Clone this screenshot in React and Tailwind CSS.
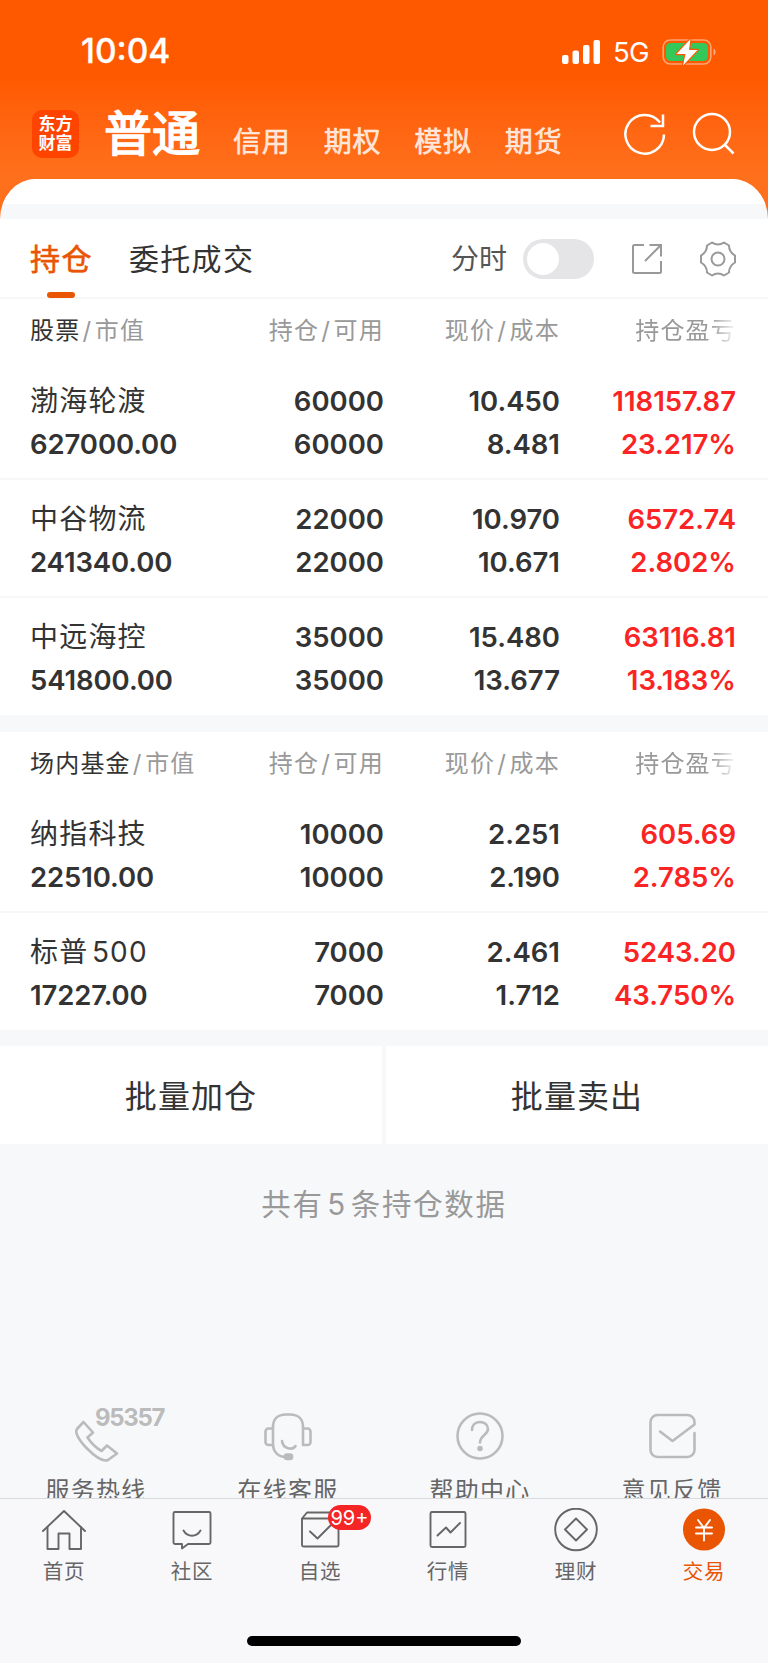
import { useState } from "react";
import clsx from "clsx";

const stocks = [
  { name: "渤海轮渡", value: "627000.00", held: "60000", usable: "60000", price: "10.450", cost: "8.481", profit: "118157.87", rate: "23.217%" },
  { name: "中谷物流", value: "241340.00", held: "22000", usable: "22000", price: "10.970", cost: "10.671", profit: "6572.74", rate: "2.802%" },
  { name: "中远海控", value: "541800.00", held: "35000", usable: "35000", price: "15.480", cost: "13.677", profit: "63116.81", rate: "13.183%" },
];

const funds = [
  { name: "纳指科技", value: "22510.00", held: "10000", usable: "10000", price: "2.251", cost: "2.190", profit: "605.69", rate: "2.785%" },
  { name: "标普500", value: "17227.00", held: "7000", usable: "7000", price: "2.461", cost: "1.712", profit: "5243.20", rate: "43.750%" },
];

const accounts = ["信用", "期权", "模拟", "期货"];

function StatusBar() {
  return (
    <div className="flex h-[103px] items-center justify-between pl-[81px] pr-[50px]">
      <span className="text-[33.500px] font-medium leading-none [-webkit-text-stroke:0.3px]">10:04</span>
      <div className="flex items-center">
        <svg width="40" height="26" viewBox="0 0 40 26" fill="#fff">
          <rect x="1" y="16" width="6.5" height="9" rx="2" />
          <rect x="11.5" y="11.5" width="6.5" height="13.5" rx="2" />
          <rect x="22" y="6" width="6.5" height="19" rx="2" />
          <rect x="32.5" y="1" width="6.5" height="24" rx="2" />
        </svg>
        <span className="ml-3 w-[49px] pt-0.5 text-[27.500px] leading-none tracking-tight">5G</span>
        <svg width="56" height="28" viewBox="0 0 56 28" fill="none">
          <rect x="1.2" y="2" width="47.6" height="24" rx="7" stroke="#fff" strokeOpacity=".45" strokeWidth="1.6" />
          <path d="M51.5 10.5v7c2.8-1 2.8-6 0-7z" fill="#fff" fillOpacity=".5" />
          <rect x="4" y="5" width="42" height="18" rx="4.5" fill="#34c759" />
          <path d="M28.5 1 14.5 16h9l-2.500 11.500L35.500 12h-8.500z" fill="#fff" stroke="#ff5a00" strokeWidth="2.400" strokeLinejoin="round" paintOrder="stroke" />
        </svg>
      </div>
    </div>
  );
}

function AccountBar() {
  return (
    <div className="flex h-[62px] items-center pl-[32px] pr-[33px]">
      <div className="flex h-12 w-[47px] flex-col items-center justify-center rounded-[10px] bg-[#ff4400] text-[17px] font-bold leading-[19px]">
        <span>东方</span>
        <span>财富</span>
      </div>
      <span className="ml-[25px] text-[48px] leading-none [-webkit-text-stroke:1.600px]">普通</span>
      <div className="ml-[33px] flex gap-[33px] pt-4 text-[28px] leading-none tracking-[0.800px] text-white/80 [-webkit-text-stroke:0.5px]">
        {accounts.map((item) => (
          <span key={item}>{item}</span>
        ))}
      </div>
      <svg className="ml-auto" width="44" height="44" viewBox="0 0 44 44" fill="none" stroke="#fff" strokeWidth="2.500">
        <path d="M41 22.500A19.300 19.300 0 1 1 37 10.500" />
        <path d="M40 2.500V14H27.500" />
      </svg>
      <svg className="ml-[24px]" width="44" height="44" viewBox="0 0 44 44" fill="none" stroke="#fff" strokeWidth="2.500">
        <circle cx="21" cy="20" r="18" />
        <path d="m33.500 32.500 9 9" />
      </svg>
    </div>
  );
}

function Tabs() {
  const [chart, setChart] = useState(false);
  return (
    <div className="flex h-20 items-center border-b-2 border-[#f7f7f8] pl-[30px] pr-[31px] pt-0.5 leading-none text-[#333]">
      <div className="relative flex h-full items-center text-[30px] tracking-[1.500px] text-[#ea5504] [-webkit-text-stroke:0.600px]">
        持仓
        <span className="absolute -bottom-px left-[17px] h-1.5 w-7 rounded-full bg-[#ea5504]" />
      </div>
      <span className="ml-9 text-[30px] tracking-[1.300px]">委托成交</span>
      <span className="ml-auto text-[28px] text-[#555]">分时</span>
      <button
        className={clsx("ml-4 flex h-10 w-[71px] items-center rounded-full px-1", chart ? "justify-end bg-[#ea5504]" : "bg-[#e5e5e7]")}
        onClick={() => setChart(!chart)}
      >
        <span className="h-8 w-8 rounded-full bg-white" />
      </button>
      <svg className="ml-[37px]" width="32" height="32" viewBox="0 0 32 32" fill="none" stroke="#999" strokeWidth="2">
        <path d="M13 2H3.500A1.500 1.500 0 0 0 2 3.500v25A1.500 1.500 0 0 0 3.500 30h25a1.500 1.500 0 0 0 1.500-1.500V18" />
        <path d="M18.500 2H30v11.500M30 2 14 18" />
      </svg>
      <svg className="ml-9" width="38" height="38" viewBox="0 0 38 38" fill="none" stroke="#999" strokeWidth="2" strokeLinejoin="round">
        <path d="M13 2.500Q19 6.500 25 2.500L30 5.500Q30 12 36 15.500V22.500Q30 26 30 32.500L25 35.500Q19 31.500 13 35.500L8 32.500Q8 26 2 22.500V15.500Q8 12 8 5.500Z" />
        <circle cx="19" cy="19" r="6.500" />
      </svg>
    </div>
  );
}

function Slash() {
  return <span className="ml-[2px] mr-[2.500px]">/</span>;
}

function Holdings({ title, rows }) {
  return (
    <section className="bg-white">
      <div className="grid h-[63px] grid-cols-[178px_176px_176px_176px] items-center pl-[30px] text-right text-[24px] leading-none tracking-[1.200px] text-[#999]">
        <div className="whitespace-nowrap text-left">
          <span className="text-[#333]">{title}</span>
          <Slash />
          市值
        </div>
        <div>持仓<Slash />可用</div>
        <div>现价<Slash />成本</div>
        <div className="[mask-image:linear-gradient(to_right,#000_150px,transparent_178px)]">持仓盈亏</div>
      </div>
      {rows.map((row) => (
        <div
          key={row.name}
          className="grid h-[118px] grid-cols-[177px_177px_176px_176px] border-b-2 border-[#f7f7f8] pl-[30px] pt-[18px] text-right text-[27.500px] font-semibold leading-[42.500px] text-[#333] last:h-[117px] last:border-b-0"
        >
          <div className="text-left">
            <p className="pt-px text-[28px] font-normal leading-[41.500px] tracking-[1.200px] [text-autospace:normal]">{row.name}</p>
            <p className="tracking-[-0.100px]">{row.value}</p>
          </div>
          <div>
            <p>{row.held}</p>
            <p>{row.usable}</p>
          </div>
          <div>
            <p>{row.price}</p>
            <p>{row.cost}</p>
          </div>
          <div className="text-[#fb2424]">
            <p>{row.profit}</p>
            <p>{row.rate}</p>
          </div>
        </div>
      ))}
    </section>
  );
}

function ServiceIcon({ children }) {
  return (
    <svg width="52" height="52" viewBox="0 0 52 52" fill="none" stroke="#bbb" strokeWidth="2.600" strokeLinecap="round" strokeLinejoin="round">
      {children}
    </svg>
  );
}

function Services() {
  return (
    <div className="grid h-24 grid-cols-4 overflow-hidden pt-2 text-center text-[24px] leading-none tracking-[1.200px] text-[#666]">
      <div className="relative flex flex-col items-center gap-[17px]">
        <ServiceIcon>
          <path d="M13.500 12 7 19C4.500 22 8.500 30 17 38.500S33.500 52 38 50L47 43.500 37 35.500 31.500 41C27 38.500 20.500 32 17.500 27.500L23 22.500Z" />
        </ServiceIcon>
        <span className="absolute -top-[5px] left-[95px] text-[24px] font-bold leading-[26px] tracking-[-1.300px] text-[#bbb]">95357</span>
        服务热线
      </div>
      <div className="flex flex-col items-center gap-[17px]">
        <ServiceIcon>
          <path d="M11 34V17c0-8 5-12.500 13-12.500h4c8 0 13 4.500 13 12.500v17M11 34c0 7.500 5 13 13 13" />
          <path d="M10 18.500H6.500a3 3 0 0 0-3 3V32a3 3 0 0 0 3 3H11M42 18.500h3.500a3 3 0 0 1 3 3V32a3 3 0 0 1-3 3H41" />
          <path d="M20 31c1 8 10.500 9.500 13.500 5" />
          <rect x="23" y="44.500" width="7" height="4.500" rx="2" fill="#bbb" />
        </ServiceIcon>
        在线客服
      </div>
      <div className="flex flex-col items-center gap-[17px]">
        <ServiceIcon>
          <circle cx="26" cy="26" r="22.500" />
          <path d="M18 20c0-11 16-10 16-1 0 6-8 6-8 13.500" />
          <circle cx="26" cy="38.500" r="1.500" fill="#bbb" />
        </ServiceIcon>
        帮助中心
      </div>
      <div className="flex flex-col items-center gap-[17px]">
        <ServiceIcon>
          <path d="M14 21.500 26.500 31 48.500 14.500V12a7 7 0 0 0-7-7h-30a7 7 0 0 0-7 7v28a7 7 0 0 0 7 7h30a7 7 0 0 0 7-7V23" />
        </ServiceIcon>
        意见反馈
      </div>
    </div>
  );
}

const navItems = [
  {
    label: "首页",
    icon: (
      <>
        <path d="M3 23 24 3l21 20" />
        <path d="M7.500 19v22h11V25.500h11V41h11.500V19" />
      </>
    ),
  },
  {
    label: "社区",
    icon: (
      <>
        <path d="M7 4h34a1.500 1.500 0 0 1 1.500 1.500v29A1.500 1.500 0 0 1 41 36H20l-6 4.500V36H7a1.500 1.500 0 0 1-1.500-1.500v-29A1.500 1.500 0 0 1 7 4z" />
        <path d="M15.500 22.500c4 7 13 7 17 0" />
      </>
    ),
  },
  {
    label: "自选",
    badge: "99+",
    icon: (
      <>
        <path d="M6 10.500 11 4.500h26l5.500 6M6 10.500h36.500V37A1.500 1.500 0 0 1 41 38.500H7.500A1.500 1.500 0 0 1 6 37z" />
        <path d="m14 23.500 7.500 7L35 17" />
      </>
    ),
  },
  {
    label: "行情",
    icon: (
      <>
        <rect x="6.500" y="4" width="35" height="35" rx="1.500" />
        <path d="m13.500 27.500 8.500-8 4.500 5 9.500-9.500" />
      </>
    ),
  },
  {
    label: "理财",
    icon: (
      <>
        <circle cx="24" cy="21.500" r="20.800" />
        <path d="m24 10.500 11 11-11 11-11-11z" />
      </>
    ),
  },
  {
    label: "交易",
    active: true,
    icon: (
      <>
        <circle cx="24" cy="21.500" r="21" fill="#ea5504" stroke="none" />
        <path d="m18 12 6 8 6-8M24 20v12.500M16 19.500h16M16 25.500h16" stroke="#fff" />
      </>
    ),
  },
];

function BottomNav() {
  return (
    <nav className="flex h-[165px] flex-col justify-between border-t border-[#d9dadc] bg-[#f8f8fb] pb-[17px]">
      <div className="grid grid-cols-6 pt-[9px]">
        {navItems.map((item) => (
          <div key={item.label} className={clsx("relative flex flex-col items-center text-[20.500px] leading-none tracking-[0.800px]", item.active ? "text-[#ea5504]" : "text-[#666]")}>
            <svg width="48" height="44" viewBox="0 0 48 44" fill="none" stroke="#666" strokeWidth="1.900" strokeLinejoin="round" strokeLinecap="round">
              {item.icon}
            </svg>
            <span className="mt-2.5">{item.label}</span>
            {item.badge && (
              <span className="absolute -top-[3px] left-[72px] flex h-[25px] w-[43px] items-center justify-center rounded-full bg-[#f52525] text-[20px] tracking-normal text-white">
                {item.badge}
              </span>
            )}
          </div>
        ))}
      </div>
      <div className="mx-auto h-2.5 w-[274px] rounded-full bg-black" />
    </nav>
  );
}

export default function App() {
  return (
    <div className="flex h-[1663px] w-[768px] flex-col overflow-hidden bg-[#f7f8fa] font-['Inter','Noto_Sans_CJK_SC',sans-serif]">
      <header className="-mb-10 h-[219px] shrink-0 bg-linear-to-b from-[#ff5900] from-35% to-[#ff701c] to-80% text-white">
        <StatusBar />
        <AccountBar />
      </header>
      <div className="h-10 shrink-0 overflow-hidden rounded-t-[36px_40px] bg-[#f7f8fa]">
        <div className="h-[25px] bg-white" />
      </div>
      <div className="bg-white">
        <Tabs />
      </div>
      <Holdings title="股票" rows={stocks} />
      <div className="mt-[17px]">
        <Holdings title="场内基金" rows={funds} />
      </div>
      <div className="mt-4 grid h-[98px] grid-cols-2 gap-1 text-[32px] tracking-[1.100px] text-[#333]">
        <button className="bg-white pt-1">批量加仓</button>
        <button className="bg-white pt-1">批量卖出</button>
      </div>
      <p className="mt-[45px] text-center text-[29.500px] leading-[30px] tracking-[1.700px] text-[#999] [text-autospace:normal]">共有5条持仓数据</p>
      <div className="mt-auto">
        <Services />
        <BottomNav />
      </div>
    </div>
  );
}
